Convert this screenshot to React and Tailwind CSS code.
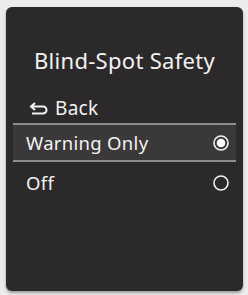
import React from "react";

const Radio = ({ checked }) => (
    <svg width="18" height="18" viewBox="0 0 18 18">
        <circle cx="9" cy="9" r="7" fill="none" stroke="#f2f2f2" strokeWidth="1.6" />
        {checked && <circle cx="9" cy="9" r="4.3" fill="#ffffff" />}
    </svg>
);

const BackArrow = () => (
    <svg width="20" height="14" viewBox="0 0 20 14" fill="none" stroke="#f2f2f2" strokeWidth="2">
        <path d="M6 2 L2 5.5 L6 9" strokeLinejoin="miter" />
        <path d="M2 5.5 H14 a3.5 3.5 0 0 1 0 7 H3" />
    </svg>
);

const App = () => {
    return (
        <div className="w-[248px] h-[295px] bg-[#ececec] pl-[6px] pt-[7px]" style={{ fontFamily: '"Noto Sans", sans-serif' }}>
            <div className="w-[237px] h-[284px] rounded-md bg-[#2b2929] shadow-[0_2px_3px_rgba(0,0,0,0.35)] flex flex-col pt-[40px]">

                {/* Title */}
                <div className="text-center text-[22px] leading-[26px] text-[#f2f2f2] tracking-[0.3px]">
                    Blind-Spot Safety
                </div>

                {/* Back */}
                <div className="flex items-center gap-[6px] pl-[23px] mt-[23px] h-[24px] text-[19px] text-[#f2f2f2] tracking-[0.3px]">
                    <BackArrow />
                    <span>Back</span>
                </div>

                {/* Options */}
                <div className="mx-[7px] mt-[3px] border-t-2 border-[#8d8d8d]">
                    <div className="flex items-center justify-between h-[35px] bg-[#3a3838] pl-[13px] pr-[6px] text-[18.5px] text-[#f2f2f2] tracking-[0.3px]">
                        <span>Warning Only</span>
                        <Radio checked />
                    </div>
                </div>
                <div className="mx-[7px] border-t-2 border-[#8d8d8d]">
                    <div className="flex items-center justify-between h-[42px] pl-[13px] pr-[6px] text-[18.5px] text-[#f2f2f2] tracking-[0.3px]">
                        <span>Off</span>
                        <Radio />
                    </div>
                </div>
            </div>
        </div>
    );
};

export default App;
